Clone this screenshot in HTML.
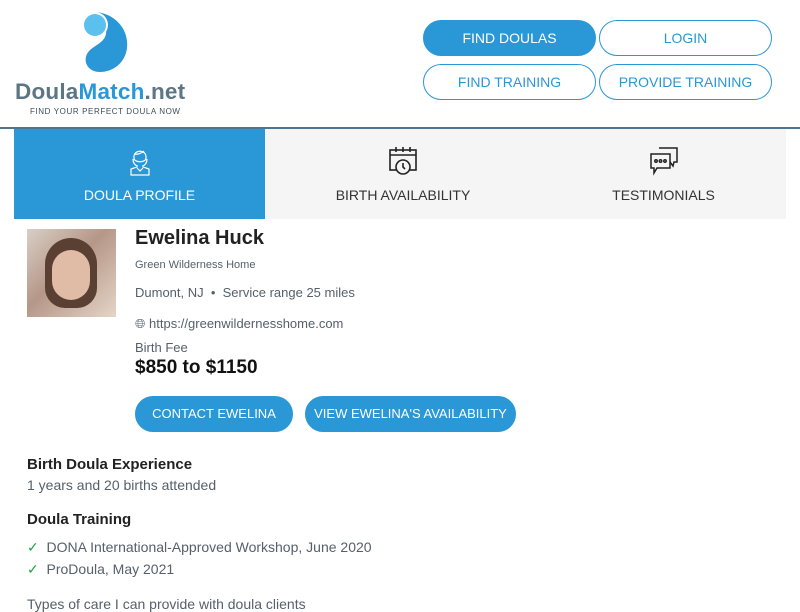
<!DOCTYPE html>
<html><head><style>
*{margin:0;padding:0;box-sizing:border-box}
body{width:800px;height:600px;overflow:hidden;background:#fff;font-family:"Liberation Sans",sans-serif;position:relative;color:#222}
.a{position:absolute}
.btn{position:absolute;height:36px;border:1px solid #2a97d6;border-radius:18px;color:#2a97d6;font-size:14px;text-align:center;line-height:34px}
.fill{background:#2a97d6;color:#fff}
.tab{position:absolute;top:129px;height:90px;text-align:center;font-size:14px;color:#333}
.g{color:#55606a}
</style></head><body>
<svg class="a" style="left:80px;top:10px" width="50" height="64" viewBox="0 0 50 64">
<path d="M16 2 C36 4 49 20 47 38 C45 54 32 62 20 62 C8 62 3 52 7 44 C11 36 24 34 26 24 C27 16 22 8 16 2Z" fill="#2a97d6"/>
<circle cx="15" cy="15" r="13" fill="#fff"/>
<circle cx="15" cy="15" r="11" fill="#5bc0ee"/>
</svg>
<div class="a" style="left:15px;top:79px;font-size:22.5px;font-weight:bold;letter-spacing:0.2px"><span style="color:#5d7683">Doula</span><span style="color:#2a97d6">Match</span><span style="color:#5d7683">.net</span></div>
<div class="a" style="left:30px;top:107px;font-size:8px;color:#3d4d58;letter-spacing:0.6px">FIND YOUR PERFECT DOULA NOW</div>
<div class="btn fill" style="left:423px;top:20px;width:173px">FIND DOULAS</div>
<div class="btn" style="left:599px;top:20px;width:173px">LOGIN</div>
<div class="btn" style="left:423px;top:64px;width:173px">FIND TRAINING</div>
<div class="btn" style="left:599px;top:64px;width:173px">PROVIDE TRAINING</div>
<div class="a" style="left:0;top:127px;width:800px;height:2px;background:#4d7591"></div>
<div class="a" style="left:265px;top:129px;width:521px;height:90px;background:#f5f5f5"></div>
<div class="tab" style="left:14px;width:251px;background:#2a97d6;color:#fff">
<svg style="margin-top:17px" width="24" height="30" viewBox="0 0 24 30" fill="none" stroke="#fff" stroke-width="1.2"><path d="M6 12 C5 3 19 3 18 12 C18 17 6 17 6 12Z M5 13 C5 17 7 19 9 20 M19 13 C19 17 17 19 15 20 M9 19 L9 21 L3 23 L3 29 L21 29 L21 23 L15 21 L15 19 M9 22 L12 25 L15 22 M6 8 C9 9 14 7 16 5"/></svg>
<div style="margin-top:8px;font-size:14px">DOULA PROFILE</div></div>
<div class="tab" style="left:265px;width:276px">
<svg style="margin-top:17px" width="30" height="30" viewBox="0 0 30 30" fill="none" stroke="#222" stroke-width="1.6"><rect x="2" y="4" width="26" height="20"/><path d="M2 9 H28 M8 1 V6 M15 1 V6 M22 1 V6"/><circle cx="15" cy="21" r="7" fill="#f5f5f5"/><path d="M15 17 V21 L17 23"/></svg>
<div style="margin-top:8px">BIRTH AVAILABILITY</div></div>
<div class="tab" style="left:541px;width:245px">
<svg style="margin-top:17px" width="30" height="30" viewBox="0 0 30 30" fill="none" stroke="#222" stroke-width="1.5"><path d="M10 2 H28 V16 H25 L24 20 L21 16"/><path d="M2 8 H21 V22 H8 L5 27 V22 H2Z" fill="#f5f5f5"/><circle cx="7" cy="15" r="1.2"/><circle cx="11.5" cy="15" r="1.2"/><circle cx="16" cy="15" r="1.2"/></svg>
<div style="margin-top:8px">TESTIMONIALS</div></div>
<div class="a" style="left:27px;top:229px;width:89px;height:88px;background:linear-gradient(135deg,#d9cfc6,#b59787 45%,#e5d5c8)"></div>
<div class="a" style="left:45px;top:238px;width:52px;height:70px;border-radius:26px 26px 20px 20px;background:#5a3f33"></div>
<div class="a" style="left:52px;top:250px;width:38px;height:50px;border-radius:19px;background:#e0bba6"></div>
<div class="a" style="left:135px;top:227px;font-size:20px;font-weight:bold;color:#222">Ewelina Huck</div>
<div class="a g" style="left:135px;top:259px;font-size:11px">Green Wilderness Home</div>
<div class="a g" style="left:135px;top:285px;font-size:13px">Dumont, NJ &nbsp;•&nbsp; Service range 25 miles</div>
<div class="a g" style="left:135px;top:316px;font-size:13px">🌐︎ https://greenwildernesshome.com</div>
<div class="a g" style="left:135px;top:340px;font-size:13px">Birth Fee</div>
<div class="a" style="left:135px;top:357px;font-size:19px;font-weight:bold;color:#111">$850 to $1150</div>
<div class="btn fill" style="left:135px;top:396px;width:158px;font-size:13px">CONTACT EWELINA</div>
<div class="btn fill" style="left:305px;top:396px;width:211px;font-size:13px">VIEW EWELINA'S AVAILABILITY</div>
<div class="a" style="left:27px;top:456px;font-size:15px;font-weight:bold;color:#222">Birth Doula Experience</div>
<div class="a g" style="left:27px;top:477px;font-size:14px">1 years and 20 births attended</div>
<div class="a" style="left:27px;top:511px;font-size:15px;font-weight:bold;color:#222">Doula Training</div>
<div class="a g" style="left:27px;top:539px;font-size:14px"><span style="color:#1ea64a">✓</span>&nbsp; DONA International-Approved Workshop, June 2020</div>
<div class="a g" style="left:27px;top:561px;font-size:14px"><span style="color:#1ea64a">✓</span>&nbsp; ProDoula, May 2021</div>
<div class="a g" style="left:27px;top:596px;font-size:14px">Types of care I can provide with doula clients</div>
</body></html>
